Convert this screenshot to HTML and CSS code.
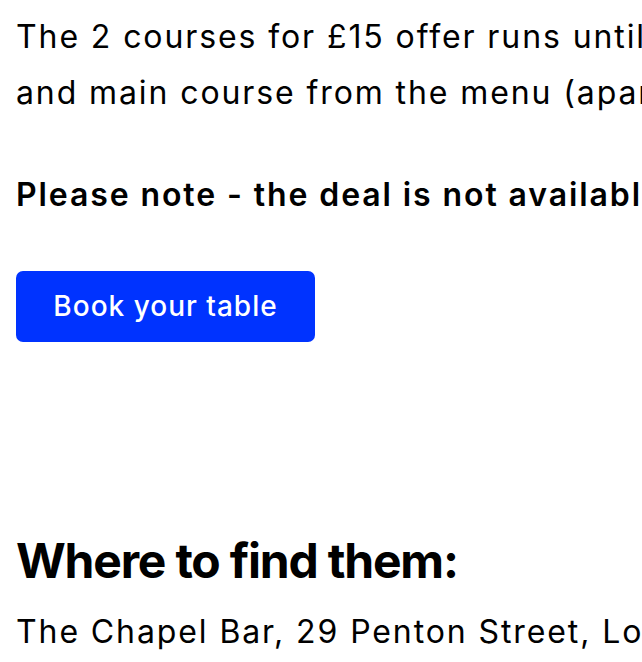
FILE: index.html
```html
<!DOCTYPE html>
<html lang="en">
<head>
<meta charset="utf-8">
<title>2 courses for £15</title>
<link rel="stylesheet" href="styles.css">
</head>
<body>
<main class="page">
  <p class="text">The 2 courses for £15 offer runs until the end of the month. Choose a starter<br>and main course from the menu (apart from the specials).</p>
  <p class="text note">Please note - the deal is not available on Fridays and Saturdays.</p>
  <a class="btn" href="#">Book your table</a>
  <h2 class="heading">Where to find them:</h2>
  <p class="text">The Chapel Bar, 29 Penton Street, London N1 9PX</p>
</main>
</body>
</html>
```
FILE: styles.css
```css
html, body {
  margin: 0;
  padding: 0;
  background: #ffffff;
  overflow: hidden;
}
.page {
  font-family: Inter, "Liberation Sans", sans-serif;
  color: #000000;
  padding: 9px 16px 0 16px;
  white-space: nowrap;
}
.text {
  margin: 0;
  font-size: 32px;
  line-height: 56px;
  font-weight: 400;
  letter-spacing: 1.9px;
}
.note {
  margin-top: 46px;
  font-weight: 600;
}
.btn {
  display: inline-block;
  margin-top: 48px;
  box-sizing: border-box;
  height: 71px;
  width: 299px;
  line-height: 71px;
  text-align: center;
  background: #0033ff;
  color: #ffffff;
  font-size: 28px;
  font-weight: 500;
  letter-spacing: 1px;
  text-decoration: none;
  border-radius: 7px;
}
.heading {
  margin: 190px 0 14px 0;
  font-size: 48px;
  line-height: 58px;
  font-weight: 700;
  letter-spacing: -1.2px;
}
```
